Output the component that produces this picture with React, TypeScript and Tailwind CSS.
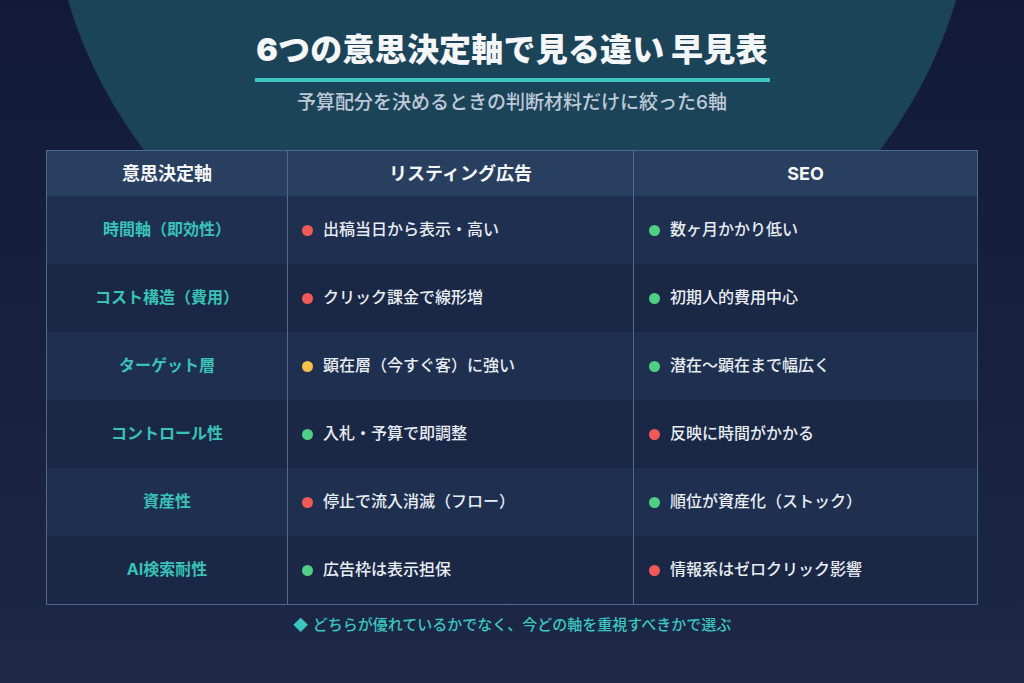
import React from "react";

type Tone = "red" | "green" | "yellow";
const dot: Record<Tone, string> = {
  red: "bg-[#f25a5a]",
  green: "bg-[#4fcf84]",
  yellow: "bg-[#f8c04a]",
};

const rows: { axis: string; a: [Tone, string]; b: [Tone, string] }[] = [
  { axis: "時間軸（即効性）", a: ["red", "出稿当日から表示・高い"], b: ["green", "数ヶ月かかり低い"] },
  { axis: "コスト構造（費用）", a: ["red", "クリック課金で線形増"], b: ["green", "初期人的費用中心"] },
  { axis: "ターゲット層", a: ["yellow", "顕在層（今すぐ客）に強い"], b: ["green", "潜在〜顕在まで幅広く"] },
  { axis: "コントロール性", a: ["green", "入札・予算で即調整"], b: ["red", "反映に時間がかかる"] },
  { axis: "資産性", a: ["red", "停止で流入消滅（フロー）"], b: ["green", "順位が資産化（ストック）"] },
  { axis: "AI検索耐性", a: ["green", "広告枠は表示担保"], b: ["red", "情報系はゼロクリック影響"] },
];

function Cell({ tone, text, pl }: { tone: Tone; text: string; pl: string }) {
  return (
    <div className={`flex items-center gap-[10px] border-l border-[#4d6a96] ${pl}`}>
      <span className={`h-[11px] w-[11px] shrink-0 rounded-full ${dot[tone]}`} />
      <span className="mb-[3px] text-[16px] font-medium leading-none text-[#e8edf4]">{text}</span>
    </div>
  );
}

export default function App() {
  return (
    <div className="relative h-[683px] w-[1024px] overflow-hidden bg-gradient-to-b from-[#121a37] to-[#1c2846] font-['Inter','Noto_Sans_CJK_JP',sans-serif]">
      <div className="absolute left-[49px] top-[-594px] h-[926px] w-[926px] rounded-full bg-[#1c4458]" />
      <div className="relative flex flex-col items-center">
        <h1 className="mt-[30px] text-[32px] font-black leading-[40px] tracking-[0.2px] text-[#f5f7fa]">
          6つの意思決定軸で見る違い 早見表
        </h1>
        <div className="mt-[8px] h-[4px] w-[515px] bg-[#3cc6c0]" />
        <p className="mt-[8px] text-[19px] font-medium leading-[26px] text-[#bfc9d8]">予算配分を決めるときの判断材料だけに絞った6軸</p>
        <div className="mt-[34px] w-[932px] border border-[#4d6a96]">
          <div className="grid h-[45px] grid-cols-[240px_346px_1fr] bg-[#283f5f] text-[18px] font-bold text-[#f5f7fa]">
            <div className="flex items-center justify-center">意思決定軸</div>
            <div className="flex items-center justify-center border-l border-[#4d6a96]">リスティング広告</div>
            <div className="flex items-center justify-center border-l border-[#4d6a96]">SEO</div>
          </div>
          {rows.map((r, i) => (
            <div
              key={r.axis}
              className={`grid h-[68px] grid-cols-[240px_346px_1fr] ${i % 2 === 0 ? "bg-[#1f2f50]" : "bg-[#1a2745]"}`}
            >
              <div className="flex items-center justify-center pb-[3px] text-[16px] font-bold text-[#38c2b8]">{r.axis}</div>
              <Cell tone={r.a[0]} text={r.a[1]} pl="pl-[14px]" />
              <Cell tone={r.b[0]} text={r.b[1]} pl="pl-[15px]" />
            </div>
          ))}
        </div>
        <p className="mt-[10px] text-[15px] font-medium leading-[20px] text-[#3cc6c0]">◆ どちらが優れているかでなく、今どの軸を重視すべきかで選ぶ</p>
      </div>
    </div>
  );
}
